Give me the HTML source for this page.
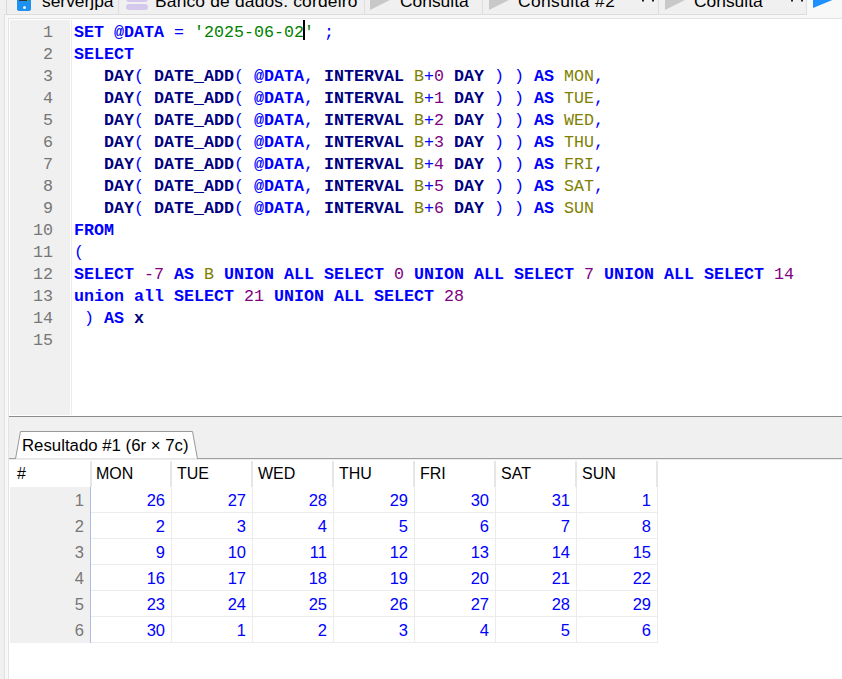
<!DOCTYPE html>
<html><head><meta charset="utf-8"><style>
html,body{margin:0;padding:0;}
body{width:842px;height:679px;overflow:hidden;background:#f0f0f0;position:relative;font-family:"Liberation Sans",sans-serif;}
.a{position:absolute;}
/* tabs */
.tabtxt{position:absolute;top:-8px;font-size:17.4px;color:#000;white-space:nowrap;line-height:19px;}
/* editor */
.code{position:absolute;left:74px;top:22px;font-family:"Liberation Mono",monospace;font-size:16.667px;line-height:22px;white-space:pre;color:#000080;}
.ln{position:absolute;left:10px;width:43px;top:22px;font-family:"Liberation Mono",monospace;font-size:16.667px;line-height:22px;white-space:pre;color:#767676;text-align:right;}
.k{color:#0000ff;font-weight:bold;}
.f{color:#000080;font-weight:bold;}
.s{color:#0000ff;}
.g{color:#008000;}
.n{color:#800080;}
.o{color:#808000;}
/* grid */
.rtab{position:absolute;left:22px;top:436px;font-size:16.8px;line-height:20px;color:#000;white-space:nowrap;}
.hd{top:464px;font-size:16px;line-height:20px;color:#000;white-space:nowrap;}
.rn{width:74px;text-align:right;font-size:16.5px;line-height:26px;color:#777;}
.dc{width:74px;text-align:right;font-size:16.5px;line-height:26px;color:#0000ff;}

table{border-collapse:collapse;position:absolute;left:10px;top:461px;font-size:16px;}
</style></head><body>
<!-- tab strip -->
<div class="a" style="left:4px;top:14px;width:838px;height:665px;background:#f8f8f8;"></div>
<div class="a" style="left:806px;top:0;width:36px;height:14px;background:#f8f8f8;"></div>
<div class="a" style="left:6px;top:0;width:800px;height:14px;background:#f0f0f0;"></div>
<div class="a" style="left:6px;top:0;width:1px;height:14px;background:#d9d9d9;"></div>
<div class="a" style="left:118px;top:0;width:1px;height:14px;background:#dedede;"></div>
<div class="a" style="left:364px;top:0;width:1px;height:14px;background:#dedede;"></div>
<div class="a" style="left:482px;top:0;width:1px;height:14px;background:#dedede;"></div>
<div class="a" style="left:658px;top:0;width:1px;height:14px;background:#dedede;"></div>
<div class="a" style="left:806px;top:0;width:1px;height:14px;background:#dedede;"></div>
<div class="a" style="left:4px;top:14px;width:803px;height:1px;background:#dcdcdc;"></div>
<div class="a" style="left:4px;top:14px;width:1px;height:665px;background:#e0e0e0;"></div>
<!-- icons -->
<div class="a" style="left:17px;top:-4px;width:14px;height:15px;background:#1e90f0;border-radius:2px;"></div>
<div class="a" style="left:19px;top:0px;width:10px;height:1px;background:#333;"></div><div class="a" style="left:27px;top:0px;width:2px;height:1px;background:#3a3;"></div>
<div class="a" style="left:23px;top:6px;width:3px;height:3px;background:#e8f2ff;border-radius:50%;"></div>
<div class="a" style="left:126px;top:-4px;width:22px;height:6px;background:#d4c8ec;border-radius:3px;"></div>
<div class="a" style="left:126px;top:4px;width:22px;height:6px;background:#d4c8ec;border-radius:3px;"></div>
<svg class="a" style="left:0;top:0" width="842" height="14">
<polygon points="370,-11 370,10 391,-0.5" fill="#c8c8c8"/>
<polygon points="489,-11 489,10 510,-0.5" fill="#c8c8c8"/>
<polygon points="665,-11 665,10 686,-0.5" fill="#c8c8c8"/>
<polygon points="813,-11 813,8 836,-1.5" fill="#1e90ff"/>
<rect x="642" y="0" width="2" height="1.5" fill="#222"/><rect x="652" y="0" width="2" height="1.5" fill="#222"/>
<rect x="791" y="0" width="2" height="1.5" fill="#222"/><rect x="801" y="0" width="2" height="1.5" fill="#222"/>
</svg>
<div class="tabtxt" style="left:42px;">serverjpa</div>
<div class="tabtxt" style="left:155px;letter-spacing:0.18px;">Banco de dados: cordeiro</div>
<div class="tabtxt" style="left:400px;">Consulta</div>
<div class="tabtxt" style="left:518px;letter-spacing:0.4px;">Consulta #2</div>
<div class="tabtxt" style="left:694px;">Consulta</div>

<!-- editor frame -->
<div class="a" style="left:8px;top:18px;width:834px;height:1px;background:#e3e3e3;"></div>
<div class="a" style="left:8px;top:18px;width:1px;height:661px;background:#e3e3e3;"></div>
<div class="a" style="left:9px;top:19px;width:833px;height:397px;background:#fff;"></div>
<div class="a" style="left:10px;top:20px;width:60px;height:395px;background:#f0f0f0;"></div>
<div class="a" style="left:71px;top:20px;width:1px;height:395px;background:#ececec;"></div>

<div class="ln">1
2
3
4
5
6
7
8
9
10
11
12
13
14
15</div>
<div class="code"><span class="k">SET</span> <span class="k">@DATA</span> <span class="s">=</span> <span class="g">'2025-06-02'</span> <span class="s">;</span>
<span class="k">SELECT</span>
   <span class="f">DAY</span><span class="s">(</span> <span class="f">DATE_ADD</span><span class="s">(</span> <span class="k">@DATA</span><span class="s">,</span> <span class="f">INTERVAL</span> <span class="o">B</span><span class="s">+</span><span class="n">0</span> <span class="f">DAY</span> <span class="s">)</span> <span class="s">)</span> <span class="k">AS</span> <span class="o">MON</span><span class="s">,</span>
   <span class="f">DAY</span><span class="s">(</span> <span class="f">DATE_ADD</span><span class="s">(</span> <span class="k">@DATA</span><span class="s">,</span> <span class="f">INTERVAL</span> <span class="o">B</span><span class="s">+</span><span class="n">1</span> <span class="f">DAY</span> <span class="s">)</span> <span class="s">)</span> <span class="k">AS</span> <span class="o">TUE</span><span class="s">,</span>
   <span class="f">DAY</span><span class="s">(</span> <span class="f">DATE_ADD</span><span class="s">(</span> <span class="k">@DATA</span><span class="s">,</span> <span class="f">INTERVAL</span> <span class="o">B</span><span class="s">+</span><span class="n">2</span> <span class="f">DAY</span> <span class="s">)</span> <span class="s">)</span> <span class="k">AS</span> <span class="o">WED</span><span class="s">,</span>
   <span class="f">DAY</span><span class="s">(</span> <span class="f">DATE_ADD</span><span class="s">(</span> <span class="k">@DATA</span><span class="s">,</span> <span class="f">INTERVAL</span> <span class="o">B</span><span class="s">+</span><span class="n">3</span> <span class="f">DAY</span> <span class="s">)</span> <span class="s">)</span> <span class="k">AS</span> <span class="o">THU</span><span class="s">,</span>
   <span class="f">DAY</span><span class="s">(</span> <span class="f">DATE_ADD</span><span class="s">(</span> <span class="k">@DATA</span><span class="s">,</span> <span class="f">INTERVAL</span> <span class="o">B</span><span class="s">+</span><span class="n">4</span> <span class="f">DAY</span> <span class="s">)</span> <span class="s">)</span> <span class="k">AS</span> <span class="o">FRI</span><span class="s">,</span>
   <span class="f">DAY</span><span class="s">(</span> <span class="f">DATE_ADD</span><span class="s">(</span> <span class="k">@DATA</span><span class="s">,</span> <span class="f">INTERVAL</span> <span class="o">B</span><span class="s">+</span><span class="n">5</span> <span class="f">DAY</span> <span class="s">)</span> <span class="s">)</span> <span class="k">AS</span> <span class="o">SAT</span><span class="s">,</span>
   <span class="f">DAY</span><span class="s">(</span> <span class="f">DATE_ADD</span><span class="s">(</span> <span class="k">@DATA</span><span class="s">,</span> <span class="f">INTERVAL</span> <span class="o">B</span><span class="s">+</span><span class="n">6</span> <span class="f">DAY</span> <span class="s">)</span> <span class="s">)</span> <span class="k">AS</span> <span class="o">SUN</span>
<span class="k">FROM</span>
<span class="s">(</span>
<span class="k">SELECT</span> <span class="n">-7</span> <span class="k">AS</span> <span class="o">B</span> <span class="k">UNION</span> <span class="k">ALL</span> <span class="k">SELECT</span> <span class="n">0</span> <span class="k">UNION</span> <span class="k">ALL</span> <span class="k">SELECT</span> <span class="n">7</span> <span class="k">UNION</span> <span class="k">ALL</span> <span class="k">SELECT</span> <span class="n">14</span>
<span class="k">union</span> <span class="k">all</span> <span class="k">SELECT</span> <span class="n">21</span> <span class="k">UNION</span> <span class="k">ALL</span> <span class="k">SELECT</span> <span class="n">28</span>
 <span class="s">)</span> <span class="k">AS</span> <span class="f">x</span>
</div>

<div class="a" style="left:303px;top:20px;width:2px;height:20px;background:#000;"></div>
<!-- splitter -->
<div class="a" style="left:9px;top:416px;width:833px;height:1px;background:#8c8c8c;"></div>
<div class="a" style="left:9px;top:417px;width:833px;height:42px;background:#f0f0f0;"></div>
<div class="a" style="left:9px;top:458px;width:833px;height:1px;background:#a0a0a0;"></div>
<div class="a" style="left:9px;top:459px;width:833px;height:220px;background:#fff;"></div>
<svg class="a" style="left:0;top:425px" width="220" height="40">
<polygon points="15.5,34 20.5,6.5 192.5,6.5 197.5,34" fill="#fff" stroke="#999" stroke-width="1"/>
<rect x="16" y="33.5" width="181" height="2" fill="#fff"/>
</svg>
<div class="a" style="left:9px;top:459px;width:833px;height:1px;background:#ececec;"></div>
<div class="rtab">Resultado #1 (6r × 7c)</div>
<!-- grid -->
<div class="a" style="left:10px;top:487px;width:80px;height:156px;background:#f0f0f0;"></div>
<div class="a" style="left:90px;top:487px;width:1px;height:156px;background:#a9bde0;"></div>
<div class="a" style="left:90px;top:461px;width:2px;height:26px;background:#e6e6e6;"></div>
<div class="a" style="left:170px;top:461px;width:2px;height:26px;background:#e6e6e6;"></div>
<div class="a" style="left:171px;top:487px;width:1px;height:156px;background:#ececec;"></div>
<div class="a" style="left:251px;top:461px;width:2px;height:26px;background:#e6e6e6;"></div>
<div class="a" style="left:252px;top:487px;width:1px;height:156px;background:#ececec;"></div>
<div class="a" style="left:332px;top:461px;width:2px;height:26px;background:#e6e6e6;"></div>
<div class="a" style="left:333px;top:487px;width:1px;height:156px;background:#ececec;"></div>
<div class="a" style="left:413px;top:461px;width:2px;height:26px;background:#e6e6e6;"></div>
<div class="a" style="left:414px;top:487px;width:1px;height:156px;background:#ececec;"></div>
<div class="a" style="left:494px;top:461px;width:2px;height:26px;background:#e6e6e6;"></div>
<div class="a" style="left:495px;top:487px;width:1px;height:156px;background:#ececec;"></div>
<div class="a" style="left:575px;top:461px;width:2px;height:26px;background:#e6e6e6;"></div>
<div class="a" style="left:576px;top:487px;width:1px;height:156px;background:#ececec;"></div>
<div class="a" style="left:656px;top:461px;width:2px;height:26px;background:#e6e6e6;"></div>
<div class="a" style="left:657px;top:487px;width:1px;height:156px;background:#ececec;"></div>
<div class="a" style="left:91px;top:512px;width:567px;height:1px;background:#ececec;"></div>
<div class="a" style="left:91px;top:538px;width:567px;height:1px;background:#ececec;"></div>
<div class="a" style="left:91px;top:564px;width:567px;height:1px;background:#ececec;"></div>
<div class="a" style="left:91px;top:590px;width:567px;height:1px;background:#ececec;"></div>
<div class="a" style="left:91px;top:616px;width:567px;height:1px;background:#ececec;"></div>
<div class="a" style="left:91px;top:642px;width:567px;height:1px;background:#ececec;"></div>
<div class="a hd" style="left:17px;">#</div>
<div class="a hd" style="left:96px;">MON</div>
<div class="a hd" style="left:177px;">TUE</div>
<div class="a hd" style="left:258px;">WED</div>
<div class="a hd" style="left:339px;">THU</div>
<div class="a hd" style="left:420px;">FRI</div>
<div class="a hd" style="left:501px;">SAT</div>
<div class="a hd" style="left:582px;">SUN</div>
<div class="a rn" style="left:10px;top:487px;">1</div>
<div class="a dc" style="left:91px;top:487px;">26</div>
<div class="a dc" style="left:172px;top:487px;">27</div>
<div class="a dc" style="left:253px;top:487px;">28</div>
<div class="a dc" style="left:334px;top:487px;">29</div>
<div class="a dc" style="left:415px;top:487px;">30</div>
<div class="a dc" style="left:496px;top:487px;">31</div>
<div class="a dc" style="left:577px;top:487px;">1</div>
<div class="a rn" style="left:10px;top:513px;">2</div>
<div class="a dc" style="left:91px;top:513px;">2</div>
<div class="a dc" style="left:172px;top:513px;">3</div>
<div class="a dc" style="left:253px;top:513px;">4</div>
<div class="a dc" style="left:334px;top:513px;">5</div>
<div class="a dc" style="left:415px;top:513px;">6</div>
<div class="a dc" style="left:496px;top:513px;">7</div>
<div class="a dc" style="left:577px;top:513px;">8</div>
<div class="a rn" style="left:10px;top:539px;">3</div>
<div class="a dc" style="left:91px;top:539px;">9</div>
<div class="a dc" style="left:172px;top:539px;">10</div>
<div class="a dc" style="left:253px;top:539px;">11</div>
<div class="a dc" style="left:334px;top:539px;">12</div>
<div class="a dc" style="left:415px;top:539px;">13</div>
<div class="a dc" style="left:496px;top:539px;">14</div>
<div class="a dc" style="left:577px;top:539px;">15</div>
<div class="a rn" style="left:10px;top:565px;">4</div>
<div class="a dc" style="left:91px;top:565px;">16</div>
<div class="a dc" style="left:172px;top:565px;">17</div>
<div class="a dc" style="left:253px;top:565px;">18</div>
<div class="a dc" style="left:334px;top:565px;">19</div>
<div class="a dc" style="left:415px;top:565px;">20</div>
<div class="a dc" style="left:496px;top:565px;">21</div>
<div class="a dc" style="left:577px;top:565px;">22</div>
<div class="a rn" style="left:10px;top:591px;">5</div>
<div class="a dc" style="left:91px;top:591px;">23</div>
<div class="a dc" style="left:172px;top:591px;">24</div>
<div class="a dc" style="left:253px;top:591px;">25</div>
<div class="a dc" style="left:334px;top:591px;">26</div>
<div class="a dc" style="left:415px;top:591px;">27</div>
<div class="a dc" style="left:496px;top:591px;">28</div>
<div class="a dc" style="left:577px;top:591px;">29</div>
<div class="a rn" style="left:10px;top:617px;">6</div>
<div class="a dc" style="left:91px;top:617px;">30</div>
<div class="a dc" style="left:172px;top:617px;">1</div>
<div class="a dc" style="left:253px;top:617px;">2</div>
<div class="a dc" style="left:334px;top:617px;">3</div>
<div class="a dc" style="left:415px;top:617px;">4</div>
<div class="a dc" style="left:496px;top:617px;">5</div>
<div class="a dc" style="left:577px;top:617px;">6</div>
</body></html>
